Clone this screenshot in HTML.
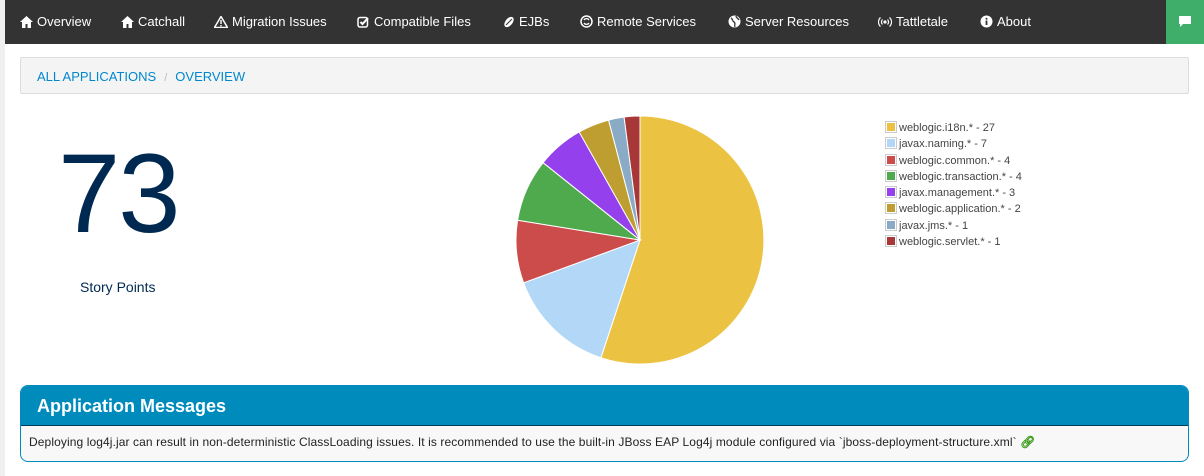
<!DOCTYPE html>
<html><head><style>
*{margin:0;padding:0;box-sizing:border-box}
body{width:1204px;height:476px;background:#fff;font-family:"Liberation Sans",sans-serif;position:relative;overflow:hidden}
.strip{position:absolute;left:0;top:0;width:5px;height:476px;background:#f0f0f0}
.nav{position:absolute;left:5px;top:0;width:1199px;height:44px;background:#333}
.nav span{position:absolute;top:14px;color:#fff;font-size:13px;white-space:nowrap}
.nav svg{vertical-align:-2px;margin-right:4px}
.green{position:absolute;left:1166px;top:0;width:38px;height:44px;background:#3fae6a}
.bc{position:absolute;left:20px;top:57px;width:1169px;height:37px;background:#f4f4f4;border:1px solid #ddd;border-radius:2px;font-size:13px;color:#0088ce;padding:11px 0 0 16px}
.bc i{color:#bbb;font-style:normal;margin:0 8px;font-size:11px}
.big{position:absolute;left:58px;top:138px;font-size:112px;color:#002952;line-height:1;letter-spacing:-2px}
.sp{position:absolute;left:80px;top:279px;font-size:14px;color:#002952}
.leg{position:absolute;left:885px;top:121px;font-size:11px;color:#444}
.leg div{height:16.3px;line-height:14px}
.leg b{display:inline-block;width:12px;height:12px;border:1px solid #ccc;vertical-align:-2px;margin-right:2px;box-shadow:inset 0 0 0 1px #fff}
.panel{position:absolute;left:20px;top:385px;width:1169px;height:77px;border:1px solid #008bbd;border-radius:8px;overflow:hidden;background:#f8f8f8}
.ph{height:40px;background:#008bbd;color:#fff;font-size:18px;font-weight:bold;padding:10px 16px;border-bottom:1px solid #003b5a}
.pb{font-size:12px;color:#222;padding:9px 8px;letter-spacing:0.1px;white-space:nowrap}
</style></head><body>
<div class="strip"></div>
<div class="nav">
<span style="left:15px"><svg width="13" height="12" viewBox="0 0 13 12"><path d="M6.5 0L0 6h2v6h3.5V8h2v4H11V6h2z" fill="#fff"/></svg>Overview</span>
<span style="left:116px"><svg width="13" height="12" viewBox="0 0 13 12"><path d="M6.5 0L0 6h2v6h3.5V8h2v4H11V6h2z" fill="#fff"/></svg>Catchall</span>
<span style="left:209px"><svg width="14" height="12" viewBox="0 0 14 12"><path d="M7 0.5L13.5 11.5H0.5z" fill="none" stroke="#fff" stroke-width="1.5"/><rect x="6.3" y="4" width="1.4" height="4" fill="#fff"/><rect x="6.3" y="9" width="1.4" height="1.4" fill="#fff"/></svg>Migration Issues</span>
<span style="left:352px"><svg width="13" height="12" viewBox="0 0 13 12"><rect x="1" y="1.5" width="9.5" height="9.5" rx="2" fill="none" stroke="#fff" stroke-width="1.5"/><path d="M3.5 6l2 2 5.5-6" fill="none" stroke="#fff" stroke-width="2"/></svg>Compatible Files</span>
<span style="left:498px"><svg width="12" height="12" viewBox="0 0 12 12"><ellipse cx="6" cy="6" rx="3.5" ry="6" transform="rotate(40 6 6)" fill="#fff"/><path d="M3 9L9 3" stroke="#333" stroke-width="1"/></svg>EJBs</span>
<span style="left:575px"><svg width="13" height="13" viewBox="0 0 13 13"><circle cx="6.5" cy="6.5" r="5.5" fill="none" stroke="#fff" stroke-width="1.5"/><path d="M4 5a3 3 0 0 1 5 0M9 8a3 3 0 0 1-5 0" fill="none" stroke="#fff" stroke-width="1.3"/></svg>Remote Services</span>
<span style="left:723px"><svg width="13" height="13" viewBox="0 0 13 13"><circle cx="6.5" cy="6.5" r="6" fill="#fff"/><path d="M3 3c2 1 1 3 3 4s0 3 1 5M8 1c0 2 2 2 3 4" stroke="#333" stroke-width="1.3" fill="none"/></svg>Server Resources</span>
<span style="left:873px"><svg width="14" height="12" viewBox="0 0 14 12"><circle cx="7" cy="6" r="1.6" fill="#fff"/><path d="M4.5 3.5a3.5 3.5 0 0 0 0 5M9.5 3.5a3.5 3.5 0 0 1 0 5M2.5 1.5a6 6 0 0 0 0 9M11.5 1.5a6 6 0 0 1 0 9" fill="none" stroke="#fff" stroke-width="1.2"/></svg>Tattletale</span>
<span style="left:975px"><svg width="13" height="13" viewBox="0 0 13 13"><circle cx="6.5" cy="6.5" r="6" fill="#fff"/><rect x="5.6" y="5.5" width="1.8" height="4.5" fill="#333"/><circle cx="6.5" cy="3.7" r="1" fill="#333"/></svg>About</span>
</div>
<div class="green"><svg style="position:absolute;left:13px;top:16px" width="12" height="11" viewBox="0 0 12 11"><path d="M0 0h12v8H4l-3 3V8H0z" fill="#fff"/></svg></div>
<div class="bc">ALL APPLICATIONS<i>/</i>OVERVIEW</div>
<div class="big">73</div>
<div class="sp">Story Points</div>
<svg style="position:absolute;left:0;top:0" width="1204" height="476">
<g stroke="#fff" stroke-width="1">
<path d="M640 240L640 116A124 124 0 1 1 600.9 357.7Z" fill="#ecc242"/>
<path d="M640 240L600.9 357.7A124 124 0 0 1 523.6 282.8Z" fill="#b3d8f7"/>
<path d="M640 240L523.6 282.8A124 124 0 0 1 517.6 220.2Z" fill="#cc4b4b"/>
<path d="M640 240L517.6 220.2A124 124 0 0 1 543.1 162.7Z" fill="#4eaa4c"/>
<path d="M640 240L543.1 162.7A124 124 0 0 1 579.2 132Z" fill="#9440ed"/>
<path d="M640 240L579.2 132A124 124 0 0 1 608.6 120.1Z" fill="#bf9e31"/>
<path d="M640 240L608.6 120.1A124 124 0 0 1 624.1 117Z" fill="#8aabc6"/>
<path d="M640 240L624.1 117A124 124 0 0 1 640 116Z" fill="#a83838"/>
</g></svg>
<div class="leg">
<div><b style="background:#ecc242"></b>weblogic.i18n.* - 27</div>
<div><b style="background:#b3d8f7"></b>javax.naming.* - 7</div>
<div><b style="background:#cc4b4b"></b>weblogic.common.* - 4</div>
<div><b style="background:#4eaa4c"></b>weblogic.transaction.* - 4</div>
<div><b style="background:#9440ed"></b>javax.management.* - 3</div>
<div><b style="background:#bf9e31"></b>weblogic.application.* - 2</div>
<div><b style="background:#8aabc6"></b>javax.jms.* - 1</div>
<div><b style="background:#a83838"></b>weblogic.servlet.* - 1</div>
</div>
<div class="panel"><div class="ph">Application Messages</div>
<div class="pb">Deploying log4j.jar can result in non-deterministic ClassLoading issues. It is recommended to use the built-in JBoss EAP Log4j module configured via `jboss-deployment-structure.xml` <span style="color:#3a9a1a;font-weight:bold">&#x1F517;&#xFE0E;</span></div></div>
</body></html>
